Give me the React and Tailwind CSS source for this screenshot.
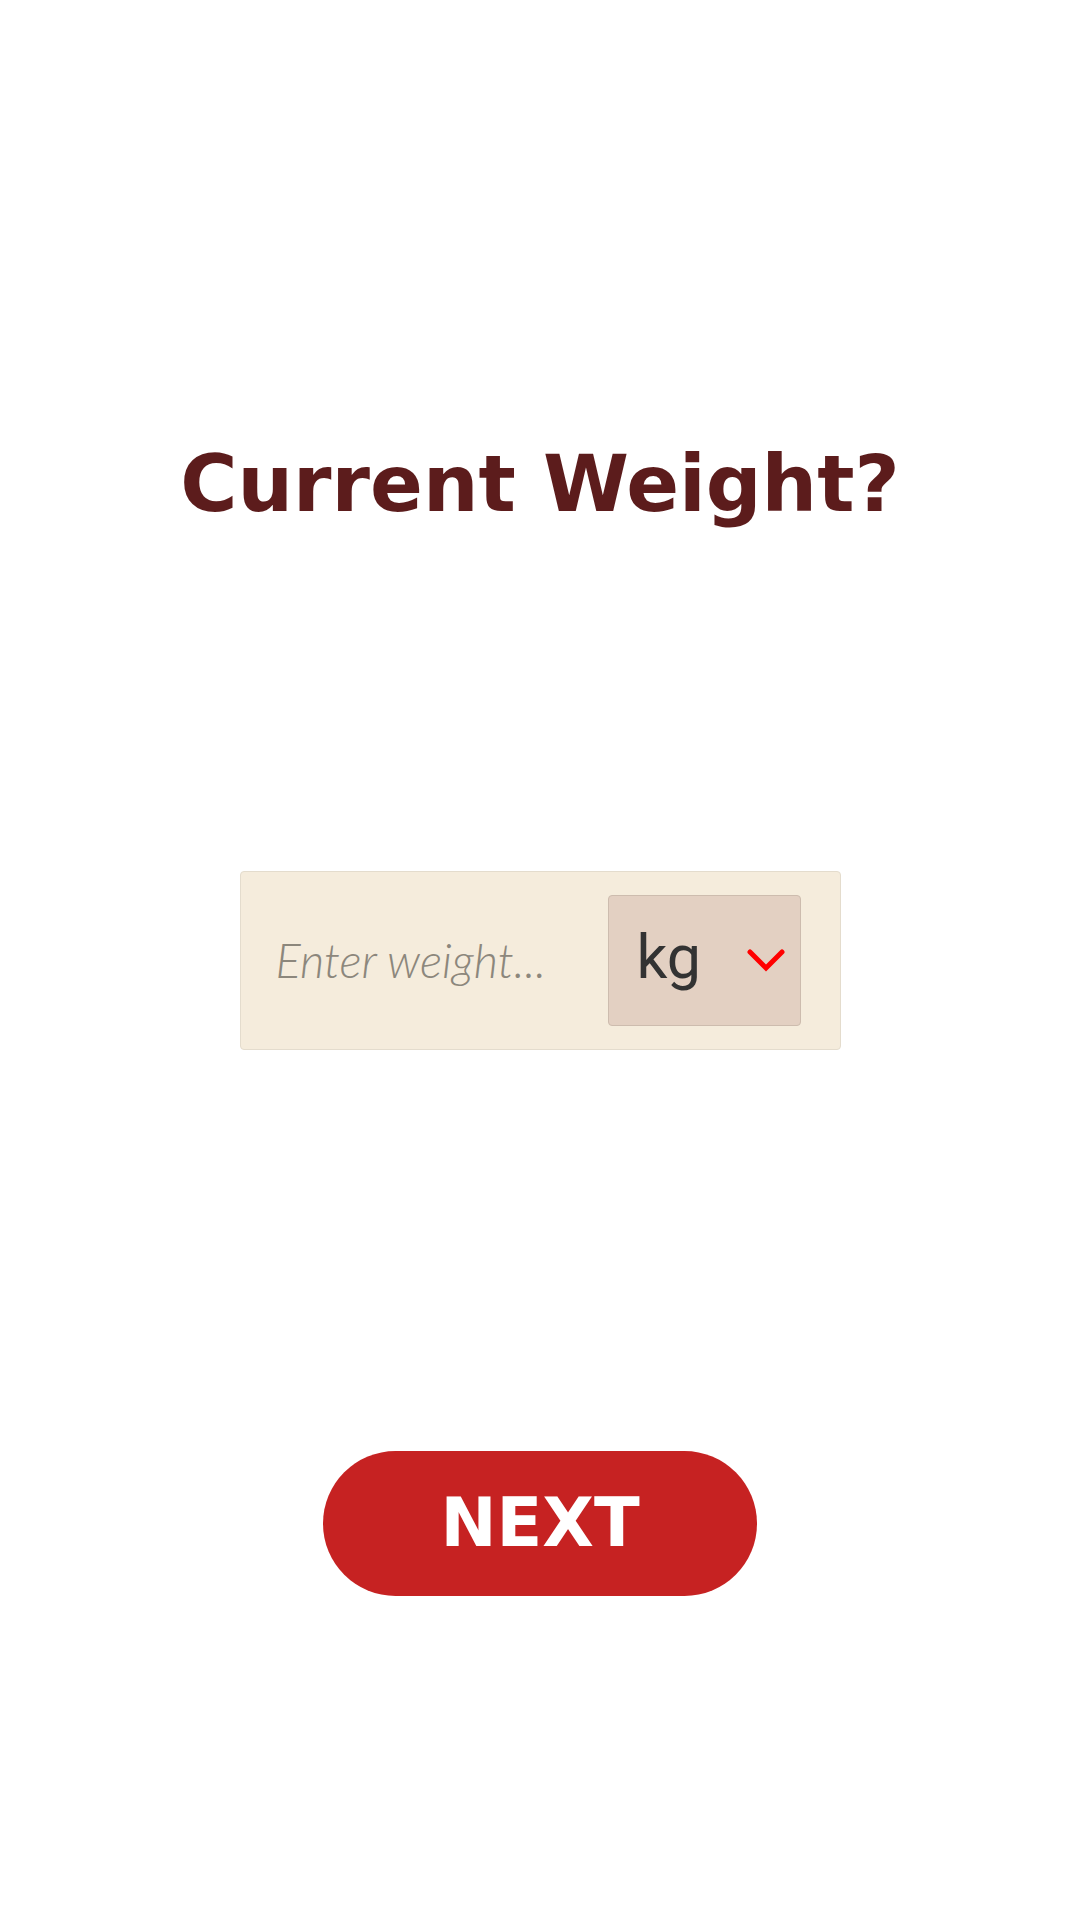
export default function App() {
  return (
    <div className="w-[1080px] h-[1920px] bg-white flex flex-col items-center">
      <h1
        className="mt-[445px] text-[78px] leading-none font-bold text-[#5c1c1c]"
        style={{ fontFamily: '"DejaVu Sans", Lato, sans-serif' }}
      >
        Current Weight?
      </h1>

      <div className="mt-[348px] w-[601px] h-[179px] bg-[#f5ecdc] border border-[#e4dccd] rounded-[4px] flex items-center justify-between pl-[35px] pr-[39px]">
        <span
          className="text-[47px] italic font-light text-[#8c877c]"
          style={{ fontFamily: 'Lato, "DejaVu Sans", sans-serif' }}
        >
          Enter weight...
        </span>
        <div className="w-[193px] h-[131px] bg-[#e3d0c2] border border-[#cdbcae] rounded-[4px] flex items-center pl-[28px] pr-[13px] justify-between">
          <span
            className="text-[61px] leading-none text-[#333333] pb-[6px]"
            style={{ fontFamily: 'Roboto, sans-serif' }}
          >
            kg
          </span>
          <svg width="40" height="26" viewBox="0 0 40 26" className="mt-[1px]">
            <path d="M3 4 L19 20 L35 4" fill="none" stroke="#ff0000" strokeWidth="5" strokeLinecap="round" strokeLinejoin="miter" />
          </svg>
        </div>
      </div>

      <button className="mt-[401px] w-[434px] h-[145px] rounded-full bg-[#c62222] flex items-center justify-center">
        <span
          className="text-[67px] leading-none font-bold text-white"
          style={{ fontFamily: '"DejaVu Sans", sans-serif' }}
        >
          NEXT
        </span>
      </button>
    </div>
  )
}
